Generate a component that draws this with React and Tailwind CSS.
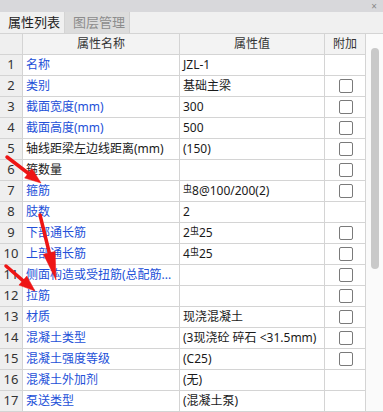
import React from 'react';

const ROWS = [
    { name: '名称', value: 'JZL-1', blue: true, cb: false },
    { name: '类别', value: '基础主梁', blue: true, cb: true },
    { name: '截面宽度(mm)', value: '300', blue: true, cb: true },
    { name: '截面高度(mm)', value: '500', blue: true, cb: true },
    { name: '轴线距梁左边线距离(mm)', value: '(150)', blue: false, cb: true },
    { name: '箍数量', value: '', blue: false, cb: true },
    { name: '箍筋', value: ['', '8@100/200(2)'], blue: true, cb: true },
    { name: '肢数', value: '2', blue: true, cb: false },
    { name: '下部通长筋', value: ['2', '25'], blue: true, cb: true },
    { name: '上部通长筋', value: ['4', '25'], blue: true, cb: true },
    { name: '侧面构造或受扭筋(总配筋...', value: '', blue: true, cb: true },
    { name: '拉筋', value: '', blue: true, cb: true },
    { name: '材质', value: '现浇混凝土', blue: true, cb: true },
    { name: '混凝土类型', value: '(3现浇砼 碎石 <31.5mm)', blue: true, cb: true },
    { name: '混凝土强度等级', value: '(C25)', blue: true, cb: true },
    { name: '混凝土外加剂', value: '(无)', blue: true, cb: false },
    { name: '泵送类型', value: '(混凝土泵)', blue: true, cb: false },
];

// rebar grade symbol + numbers
const Value = ({ v }) => {
    if (Array.isArray(v)) {
        return (
            <span>
                {v[0]}
                <span className="text-[9px] relative -top-[3px]">虫</span>
                {v[1]}
            </span>
        );
    }
    return <span>{v}</span>;
};

const Arrow = ({ x1, y1, x2, y2, len = 15, half = 6 }) => {
    const dx = x2 - x1;
    const dy = y2 - y1;
    const d = Math.hypot(dx, dy);
    const ux = dx / d;
    const uy = dy / d;
    const bx = x2 - ux * len;
    const by = y2 - uy * len;
    const px = -uy * half;
    const py = ux * half;
    return (
        <g fill="#ee1515" stroke="#ee1515">
            <path d={`M${x1} ${y1} L${bx + ux * 2} ${by + uy * 2}`} strokeWidth="3.5" strokeLinecap="round" fill="none" />
            <polygon points={`${x2},${y2} ${bx + px},${by + py} ${bx - px},${by - py}`} strokeWidth="0.5" />
        </g>
    );
};

export default function App() {
    return (
        <div
            className="w-[383px] h-[412px] overflow-hidden relative bg-white text-[#222]"
            style={{ fontFamily: '"Noto Sans", "Noto Sans CJK SC", sans-serif' }}
        >
            {/* title strip */}
            <div className="h-[12px] bg-[#d8d8db] flex justify-end items-center pr-[6px]">
                <span className="text-[10px] leading-none text-[#888]">×</span>
            </div>

            {/* tabs */}
            <div className="h-[22px] bg-[#f0f0f0] flex border-b border-[#d4d4d4]">
                <div className="w-[65px] flex items-center pl-[8px] text-[13px] text-[#222] border-r border-[#d4d4d4]">属性列表</div>
                <div className="w-[65px] flex items-center pl-[8px] text-[13px] text-[#8c8c8c] bg-[#dcdcdc] border-r border-[#cfcfcf]">图层管理</div>
            </div>

            <div className="flex">
                <div className="w-[366px] border-r border-[#d4d4d4]">
                    {/* header */}
                    <div className="flex h-[21px] border-b border-[#d4d4d4] bg-[#f3f3f3] text-[12px] text-[#333]">
                        <div className="w-[23px] border-r border-[#d4d4d4] bg-[#efefef]"></div>
                        <div className="w-[157px] border-r border-[#d4d4d4] flex items-center justify-center">属性名称</div>
                        <div className="w-[145px] border-r border-[#d4d4d4] flex items-center justify-center">属性值</div>
                        <div className="w-[40px] flex items-center justify-center">附加</div>
                    </div>

                    {ROWS.map((r, i) => (
                        <div key={i} className="flex h-[21px] border-b border-[#d4d4d4] text-[12px]">
                            <div className="w-[23px] border-r border-[#d4d4d4] bg-[#efefef] flex items-center justify-center text-[13px] text-[#333]">
                                {i + 1}
                            </div>
                            <div className={`w-[157px] border-r border-[#d4d4d4] flex items-center pl-[3px] whitespace-nowrap overflow-hidden ${r.blue ? 'text-[#2350d8]' : 'text-[#1a1a1a]'}`}>
                                {r.name}
                            </div>
                            <div className="w-[145px] border-r border-[#d4d4d4] flex items-center pl-[3px] whitespace-nowrap overflow-hidden text-[#1a1a1a]">
                                <Value v={r.value} />
                            </div>
                            <div className="w-[40px] flex items-center justify-center pl-[1px]">
                                {r.cb && <div className="w-[14px] h-[14px] rounded-[2px] border border-[#7a7a7a] bg-white"></div>}
                            </div>
                        </div>
                    ))}
                </div>

                {/* scrollbar */}
                <div className="w-[17px] bg-[#fafafa] border-b border-[#d4d4d4] flex justify-center pt-[14px]">
                    <div className="w-[8px] h-[221px] rounded-full bg-[#c9c9c9]"></div>
                </div>
            </div>

            <svg className="absolute inset-0 pointer-events-none" width="383" height="412">
                <Arrow x1={7} y1={157} x2={41} y2={183} len={16} half={6} />
                <Arrow x1={40} y1={215} x2={56} y2={280} len={28} half={6} />
                <Arrow x1={6} y1={266} x2={35} y2={291} len={16} half={6} />
            </svg>
        </div>
    );
}
